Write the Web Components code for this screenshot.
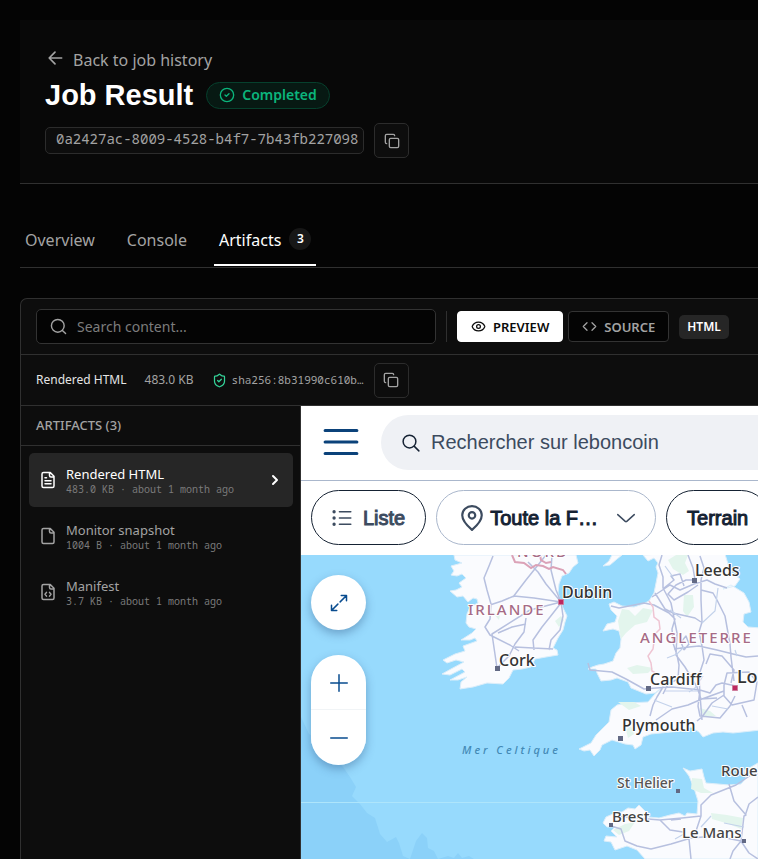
<!DOCTYPE html>
<html lang="en">
<head>
<meta charset="utf-8">
<meta name="viewport" content="width=device-width, initial-scale=1">
<title>Job Result</title>
<style>
  body { margin: 0; background: #040404; font-family: "Noto Sans", "Open Sans", sans-serif; }
</style>
</head>
<body>
<job-page></job-page>
<script>
const ICONS = {
  back: '<path d="m12 19-7-7 7-7M20 12H5"/>',
  check: '<circle cx="12" cy="12" r="10"/><path d="m9 12 2 2 4-4"/>',
  copy: '<rect width="14" height="14" x="8" y="8" rx="2"/><path d="M4 16c-1.1 0-2-.9-2-2V4c0-1.1.9-2 2-2h10c1.1 0 2 .9 2 2"/>',
  search: '<circle cx="11" cy="11" r="9"/><path d="m22 22-4.5-4.5"/>',
  eye: '<path d="M2 12.3a1 1 0 0 1 0-.6 10.8 10.8 0 0 1 20 0 1 1 0 0 1 0 .6 10.8 10.8 0 0 1-20 0"/><circle cx="12" cy="12" r="3"/>',
  code: '<path d="m16 18 6-6-6-6M8 6l-6 6 6 6"/>',
  shield: '<path d="M20 13c0 5-3.500 7.500-7.700 8.950a1 1 0 0 1-.67-.01C7.500 20.500 4 18 4 13V6a1 1 0 0 1 1-1c2 0 4.500-1.200 6.240-2.720a1.170 1.170 0 0 1 1.520 0C14.510 3.810 17 5 19 5a1 1 0 0 1 1 1z"/><path d="m9 12 2 2 4-4"/>',
  filetext: '<path d="M15 2H6a2 2 0 0 0-2 2v16a2 2 0 0 0 2 2h12a2 2 0 0 0 2-2V7zM14 2v4a2 2 0 0 0 2 2h4M10 9H8M16 13H8M16 17H8"/>',
  file: '<path d="M15 2H6a2 2 0 0 0-2 2v16a2 2 0 0 0 2 2h12a2 2 0 0 0 2-2V7zM14 2v4a2 2 0 0 0 2 2h4"/>',
  filecode: '<path d="M15 2H6a2 2 0 0 0-2 2v16a2 2 0 0 0 2 2h12a2 2 0 0 0 2-2V7zM14 2v4a2 2 0 0 0 2 2h4M10 12.500 8 15l2 2.500M14 12.500l2 2.500-2 2.500"/>',
  chevron: '<path d="m9 18 6-6-6-6"/>',
  menu: '<path d="M2 4.750h20M2 12h20M2 19.250h20"/>',
  lens: '<circle cx="10" cy="10" r="8.500"/><path d="m16.500 16.500 6 6"/>',
  list: '<path d="M9 4.500h13.500M9 12h13.500M9 19.500h13.500"/><path d="M2.500 4.500h.01M2.500 12h.01M2.500 19.500h.01" stroke-width="4"/>',
  pin: '<path d="M12 23C8.500 20 3 14.500 3 9.500a9 8.500 0 0 1 18 0C21 14.500 15.500 20 12 23z"/><circle cx="12" cy="9.500" r="3"/>',
  down: '<path d="m1 7.500 10 9q1 .8 2 0l10-9"/>',
  expand: '<path d="M15 2h7v7M22 2l-8.500 8.500M9 22H2v-7M2 22l8.500-8.500"/>',
  plus: '<path d="M12 1v22M1 12h22"/>',
  minus: '<path d="M1 12h22"/>'
};

const define = (name, markup, setup) => {
  const template = document.createElement('template');
  template.innerHTML = markup;
  customElements.define(name, class extends HTMLElement {
    static get observedAttributes() { return ['name']; }
    constructor() {
      super();
      this.attachShadow({ mode: 'open' }).append(template.content.cloneNode(true));
    }
    connectedCallback() { if (setup) setup(this, this.shadowRoot); }
    attributeChangedCallback() { if (setup) setup(this, this.shadowRoot); }
  });
};

define('ui-icon', `
  <style>
    :host { display: inline-flex; flex: none; width: var(--size, 16px); height: var(--size, 16px); }
    svg { width: 100%; height: 100%; fill: none; stroke: currentColor; stroke-linecap: round; stroke-linejoin: round; }
  </style>
  <svg viewBox="0 0 24 24" aria-hidden="true"></svg>`,
  (el, root) => {
    const svg = root.querySelector('svg');
    svg.innerHTML = ICONS[el.getAttribute('name')] || '';
    svg.setAttribute('stroke-width', el.getAttribute('weight') || 2);
  });

define('copy-button', `
  <style>
    :host { display: inline-flex; flex: none; }
    button { display: grid; place-items: center; width: 35px; height: 35px; padding: 0; color: #a3a3a3;
      background: #0d0d0d; border: 1px solid #2c2c2c; border-radius: 5px; cursor: pointer; }
  </style>
  <button type="button" aria-label="Copy"><ui-icon name="copy"></ui-icon></button>`);

define('status-badge', `
  <style>
    :host { display: inline-flex; align-items: center; gap: 7px; box-sizing: border-box; height: 27px; padding: 0 12px;
      border: 1px solid #06402d; border-radius: 14px; background: #071913; color: #0bb57c;
      font-size: 14px; line-height: 20px; font-weight: 600; }
  </style>
  <ui-icon name="check"></ui-icon><slot></slot>`);

define('job-header', `
  <style>
    :host { display: flex; flex-direction: column; align-items: flex-start; padding: 28px 25px 25px;
      background: #080808; border-bottom: 1px solid #303030; }
    a { display: flex; align-items: center; gap: 8px; color: #a3a3a3; font-size: 16px; line-height: 24px; text-decoration: none; }
    a ui-icon { --size: 20px; margin-bottom: 4px; }
    .title { display: flex; align-items: center; gap: 13px; }
    h1 { margin: 0; color: #fff; font: bold 29px/46px "Liberation Sans", Arial, sans-serif; }
    .id { display: flex; align-items: center; gap: 10px; padding-top: 5px; }
    code { box-sizing: border-box; height: 27px; padding: 0 5px 0 10px; border: 1px solid #2c2c2c; border-radius: 5px;
      background: #0d0d0d; color: #a3a3a3; font: 14px/22px "Noto Sans Mono", "DejaVu Sans Mono", monospace; }
  </style>
  <a href="#history"><ui-icon name="back"></ui-icon>Back to job history</a>
  <div class="title"><h1>Job Result</h1><status-badge>Completed</status-badge></div>
  <div class="id"><code>0a2427ac-8009-4528-b4f7-7b43fb227098</code><copy-button></copy-button></div>`);

define('tab-item', `
  <style>
    :host { display: block; }
    button { display: flex; align-items: center; gap: 8px; height: 57px; padding: 7px 5px 0; border: 0; border-bottom: 2px solid transparent;
      background: none; color: #a3a3a3; font: 16px/24px "Noto Sans", sans-serif; cursor: pointer; }
    :host([selected]) button { color: #fff; border-color: #fff; }
  </style>
  <button type="button" role="tab"><slot></slot><slot name="count"></slot></button>`);

define('tab-bar', `
  <style>
    :host { display: flex; gap: 22px; padding-bottom: 1px; border-bottom: 1px solid #303030; }
    span { display: grid; place-items: center; width: 22px; height: 22px; margin-bottom: 2px; border-radius: 11px; background: #171717; color: #fff; font-size: 12px; line-height: 16px; font-weight: 600; }
  </style>
  <tab-item>Overview</tab-item><tab-item>Console</tab-item>
  <tab-item selected>Artifacts<span slot="count">3</span></tab-item>`);

define('view-button', `
  <style>
    :host { display: inline-flex; flex: none; }
    button { display: flex; align-items: center; gap: 7px; height: 31px; padding: 0 13px; border: 1px solid #333;
      border-radius: 4px; background: #040404; color: #a3a3a3; font: 600 13px/18px "Noto Sans", sans-serif; cursor: pointer; }
    :host([active]) button { background: #fff; border-color: #fff; color: #0a0a0a; }
    ui-icon { --size: 15px; }
  </style>
  <button type="button"><ui-icon></ui-icon><slot></slot></button>`,
  (el, root) => root.querySelector('ui-icon').setAttribute('name', el.getAttribute('icon')));

define('artifact-toolbar', `
  <style>
    :host { display: flex; align-items: center; height: 55px; padding: 0 15px; border-bottom: 1px solid #303030; }
    label { display: flex; align-items: center; gap: 10px; box-sizing: border-box; width: 400px; height: 35px; padding: 0 13px;
      border: 1px solid #333; border-radius: 5px; background: #040404; color: #a3a3a3; }
    input { flex: 1; min-width: 0; padding: 0; border: 0; outline: 0; background: none; color: #fff; font: 14px/20px "Noto Sans", sans-serif; }
    input::placeholder { color: #7c7c7c; opacity: 1; }
    hr { width: 1px; height: 31px; margin: 0 10px; border: 0; background: #303030; }
    .views { display: flex; gap: 5px; }
    .type { margin-left: 10px; padding: 0 8px; border-radius: 5px; background: #262626; color: #fff; font-size: 12px; line-height: 24px; font-weight: 600; }
    ui-icon { --size: 17px; }
  </style>
  <label><ui-icon name="search"></ui-icon><input type="search" aria-label="Search content" placeholder="Search content..."></label>
  <hr>
  <div class="views"><view-button active icon="eye">PREVIEW</view-button><view-button icon="code">SOURCE</view-button></div>
  <span class="type">HTML</span>`);

define('artifact-meta', `
  <style>
    :host { display: flex; align-items: center; height: 50px; padding: 0 15px; border-bottom: 1px solid #303030; color: #a3a3a3; font-size: 12px; line-height: 18px; }
    .name { color: #e5e5e5; }
    .size { margin: 0 18px; }
    ui-icon { --size: 15px; color: #34d399; margin-right: 5px; }
    code { font: 11px/16px "Noto Sans Mono", "DejaVu Sans Mono", monospace; margin-right: 10px; }
  </style>
  <span class="name">Rendered HTML</span><span class="size">483.0 KB</span>
  <ui-icon name="shield"></ui-icon><code>sha256:8b31990c610b…</code><copy-button></copy-button>`);

define('artifact-item', `
  <style>
    :host { display: block; }
    button { display: flex; align-items: center; gap: 9px; width: 100%; height: 54px; padding: 0 10px; border: 0; border-radius: 5px;
      background: none; color: #a3a3a3; text-align: left; font: 13px/17px "Noto Sans", sans-serif; cursor: pointer; }
    :host([selected]) button { background: #262626; color: #fff; }
    div { flex: 1; min-width: 0; }
    span { display: block; }
    .sub { color: #7b7b7b; font: 10px/12px "Noto Sans Mono", "DejaVu Sans Mono", monospace; }
    ui-icon { --size: 18px; }
    .go { display: none; }
    :host([selected]) .go { display: inline-flex; --size: 16px; }
  </style>
  <button type="button"><ui-icon class="kind"></ui-icon><div><span><slot></slot></span><span class="sub"></span></div><ui-icon class="go" name="chevron" weight="3"></ui-icon></button>`,
  (el, root) => {
    root.querySelector('.kind').setAttribute('name', el.getAttribute('icon'));
    root.querySelector('.sub').textContent = el.getAttribute('detail');
  });

define('artifact-list', `
  <style>
    :host { display: block; flex: none; width: 279px; border-right: 1px solid #303030; }
    h2 { margin: 0; padding: 0 15px; border-bottom: 1px solid #303030; color: #a3a3a3; font-size: 13px; line-height: 39px; font-weight: 500; }
    nav { display: flex; flex-direction: column; gap: 2px; padding: 7px 7px 7px 8px; }
  </style>
  <h2>ARTIFACTS (3)</h2>
  <nav>
    <artifact-item selected icon="filetext" detail="483.0 KB · about 1 month ago">Rendered HTML</artifact-item>
    <artifact-item icon="file" detail="1004 B · about 1 month ago">Monitor snapshot</artifact-item>
    <artifact-item icon="filecode" detail="3.7 KB · about 1 month ago">Manifest</artifact-item>
  </nav>`);

define('filter-pill', `
  <style>
    :host { display: inline-flex; flex: none; }
    button { display: flex; align-items: center; gap: var(--gap, 10px); height: 55px; padding: 0 20px; white-space: nowrap;
      border: 1px solid var(--line, #152233); border-radius: 28px; background: #fff; color: var(--ink, #152233);
      font: 20px/28px "Liberation Sans", Arial, sans-serif; -webkit-text-stroke: 1px; cursor: pointer; }
  </style>
  <button type="button"><slot></slot></button>`);

define('coast-map', `
  <style>
    :host { display: block; position: relative; flex: 1; min-height: 304px; overflow: hidden; background: #97dafd; }
    .chart { position: absolute; inset: 0; width: 100%; height: 100%; }
    .land { fill: #fafbfe; stroke: #dceefa; stroke-width: 1; }
    .wood { fill: #e3f5ed; }
    .road { fill: none; stroke: #b7c0df; stroke-width: 1.500; stroke-linejoin: round; }
    .minor { fill: none; stroke: #c3d2eb; stroke-width: 1.200; }
    .frontier { fill: none; stroke: #efc5d3; stroke-width: 1.500; }
    text { font-family: "Noto Sans", sans-serif; paint-order: stroke; stroke: #fff; stroke-width: 2px; stroke-linejoin: round; fill: #333; font-weight: 500; font-size: 16px; }
    .small { font-size: 14px; fill: #555; }
    .mid { font-size: 15px; fill: #444; }
    .big { font-size: 18px; }
    .country { fill: #a66b86; letter-spacing: 2px; font-size: 15px; }
    .sea { fill: #4389b5; font-size: 11px; font-style: italic; letter-spacing: 3px; stroke: none; }
    .controls { position: absolute; left: 10px; top: 20px; display: flex; flex-direction: column; gap: 25px; }
    .zoom { display: flex; flex-direction: column; border-radius: 28px; overflow: hidden; }
    .zoom, .full { box-shadow: 0 4px 10px rgba(30, 60, 110, .35); }
    button { display: grid; place-items: center; width: 55px; height: 55px; padding: 0; border: 0; background: #fff; color: #094c8f; cursor: pointer; --size: 18px; }
    .full { border-radius: 28px; }
    .zoom button + button { box-shadow: 0 -1px #f1f4f6; }
  </style>
  <svg class="chart" viewBox="301 555 457 304" preserveAspectRatio="xMinYMin slice" role="img" aria-label="Map">
    <path fill="#8bd1f9" d="M301 717l8 17 18 15 16 18 7 10 6 10-4 9 8 8 7 9 8 5 5 16 7 8 9-5 3 6 4 13 7 3 6-18 6-8 5 5 1 10 6 3 4 8 10-3 6 2 4-5 4 5 7-2 8 5H301z"/>
    <path stroke="#aee5fb" d="M301 802.500H758"/>
    <path class="land" d="M454 555l1 5 7 3-11 3 3 5-3 4 6 1 5-2 4 4-7 5 3 4-6 3-6 1 7 6 6-1 5 6 5-4 4 1 1 4-8 4-3 7-1 9 3 4 7 2-4 4-11 7 9 0 5-2 2 3-14 5 2 5-10 3-12 6 4 3 9-3 8 2-13 7-9 5 8 1 12-6 3 3-15 8 8 0 9-3-6 5L460 689l13-2 14-4 16 1 6-6 4-8 9-1 9-2 4-8 11-2 12-2-1-5-4-2 5-10 5-8 2-8 2-6-4-8-2-6-3-9 1-9 3-8 7-3 4-6 5-4-2-8z"/>
    <path class="land" d="M603 566l7-1 7-6 5-4H612l-3 6z"/>
    <path class="land" d="M643 555l5 6 6-3 4 5-2 4 2 6-2 10-2 10-5 8-6 3-9 3-12-1-8-4-5 2 2 6 6 6-2 6-8 2-4 7 10-2 6 2 2 8-1 9-4 5-3 8-9 3-6 1-6 2-4 2 8 0 1 4 1 2 3 6 10-1 6-2 11 4 3 6 15 6 9-1 10-8-10 9-7 8-21 1-10 2-6 5-2 12-13 13-5 8-12 6 5 2 6-1 4 6 6-6 2-5 10-5 13 4 8 1 2 4 6-4 2-8 8-3 20-2 12-1 8-4 8 5 4 5 10-4 10-1 10 1 28-3V628l-13-1-5-5 1-8 7-2-2-10-5-9-13-8-8 4 12-3 5-7-8-6-3-6-5-16z"/>
    <path class="land" d="M683 768l7 3 12-2 2 8 2 6 12 1 11 1 12-1 5-6-2-8 7-3 7-4v96H645l-8-9-10-4-12 4-4-8-7-1 2-5 11 1-6-6 4-4-8 0-4-4 3-6 9-4 7-1 6-4 7 1 4-4 7 7 3 5 10 1 11-3 9-2 6 3 2-3 10 1 1-13-4-13-5-12z"/>
    <path class="wood" d="M668 560l8-5h12l-3 8 4 8-6 4-10-6zM684 595l9 0 1 12-7 10-4-6zM622 609l7 1 6 6 8-8 10 2-6 12-12 3-9 8-5 6-3-18zM627 668l10-3 16 3-5 5-15 1zM618 702l16 0 7 4-12 4zM692 778l10 1 2 9 9 5-12 0-10-4zM711 813l16 2 16 3-2 11-12-5-17-5zM613 830l12-6 10-2-6 9-10 4zM555 621l6-5 3 4-5 7zM492 612l8 3-1 5zM626 730l5-4 3 8-6 4zM700 708l10 3 6 5-12 1z"/>
    <g class="road">
      <path d="M497 668l-5-34 38-24 31-8M493 556l-4 10-5 12 3 12 4 14-1 15-5 8 5 8 20 10 9 6M490 605l12-4 12-5 20 2 27 4M513 597l13-17 20-25M561 602l-15-18-8-12-10-10M561 602l-5-12-5-20 1-15M561 602l2 14-3 14-9 10-2 10M534 650l-1-10 9-13 8-10 11-14M497 668l12-12 6-12 9-12 2-14M498 633l14-6 14-3M515 647l18 1 20 1"/>
      <path d="M611 606l8 2 25-5 10 2 15 8 6 6-3 10 1 14 4 12 2 10-1 14-10 5-5 10M662 555l-3 10 4 12 0 11 8 15 6 30-1 22 9 12 12 20 4 12 16-1M652 597l12-8 6-4 10 5 14-6 13-4 8 4 12 4M695 580l-2-12-5-13M694 580l-8 0-10 5-8 9 6 6 14-8 10-7M664 588l10-8-3-4 9-2 4 12M700 556l4 12-3 12 0 20 1 22-3 10 3 14 2 14-5 15 1 20 2 25M701 590l12 3 4 7 8 16 5 28 1 13 3 24M674 649l15-2 10-1 18 4 16 4 13 3 12-1M736 686l-14-3-6 2-6 8-10-3-28-3-16 1-12 1-18-10-14-7-22-2-2-7M655 593l10 16 8 4 22 5 6 4M706 664l4-10 12 2 12 14-3 13M684 650l-3-8 5-6 3 8-5 6M724 685l3-12 22-1 8 10-3 18-22 5-8-9zM742 705l5 12M724 695l-12 8-10 14-5 4M700 690l-2 16 2 10 20 2 10-12 5-10M656 720l16-11 16-4 14-6 22-8M650 716l3-11 4-8 6-10"/>
      <path d="M611 826l10 3 4 12 12 5 14 3 20-5 20-6 25-2 25 5M616 816l20 2 24 2 22-2 19-2 0-11 10-10 25-10 15-10 7-1M701 816l-6 18-6 5 2 20M741 841l3-25 2-1-12-14-5-17M741 841l-8 10-3 8M741 841l8 12 9 6M745 816l4-12 9-7M660 820l10 10 13 2M671 820l10-1"/>
    </g>
    <g class="minor"><path d="M665 566l8 11M670 610l11 8M684 647l-7 7-10 4M718 588l-3 23-13 12M735 650l2 6M703 676l-8 12-6 4M654 700l18 7M665 691l33 0M712 706l16 3M675 839l9-5M711 816l-10 11M724 823l20 4"/></g>
    <path class="frontier" d="M649 601l4 6 1 10 5 4 1 8-5 5-2 15-5 7 3 7 1 8 7 4"/>
    <path fill="none" stroke="#dba2b7" stroke-width="2" d="M512 555l3 7 9 1 7 5 5-3 7 1 6 3 4-2 10 3 3 4M540 555l1 5 5 3 5-1"/>
    <g fill="#626984"><path d="M495 666h5v5h-5zM692 578h5v5h-5zM646 686h5v5h-5zM618 736h5v5h-5zM676 789h4v4h-4zM609 823h4v4h-4zM742 839h4v4h-4z"/></g>
    <path fill="#bd2860" stroke="#ce7c9c" d="M558.500 599.500h5v5h-5zM732.500 685.500h5v5h-5z"/>
    <text class="country" x="517" y="557">NORD</text>
    <text class="country" x="468" y="615">IRLANDE</text>
    <text class="country" x="640" y="643">ANGLETERRE</text>
    <text x="695" y="576">Leeds</text><text x="562" y="598">Dublin</text><text x="499" y="666">Cork</text>
    <text x="650" y="685">Cardiff</text><text class="big" x="737" y="683">London</text><text x="622" y="731">Plymouth</text>
    <text class="small" x="617" y="788">St Helier</text><text class="mid" x="721" y="776">Rouen</text>
    <text class="mid" x="612" y="822">Brest</text><text class="mid" x="682" y="838">Le Mans</text>
    <text class="sea" x="462" y="754">Mer Celtique</text>
  </svg>
  <div class="controls">
    <button class="full" type="button" aria-label="Agrandir"><ui-icon name="expand"></ui-icon></button>
    <div class="zoom"><button type="button" aria-label="Zoomer"><ui-icon name="plus"></ui-icon></button><button type="button" aria-label="Dézoomer"><ui-icon name="minus"></ui-icon></button></div>
  </div>`);

define('site-preview', `
  <style>
    :host { display: flex; flex-direction: column; flex: 1; min-width: 0; overflow: hidden; background: #fff; }
    header { display: flex; align-items: center; gap: 20px; height: 74px; padding-left: 20px; border-bottom: 1px solid #aab7cc; box-sizing: content-box; }
    .menu { display: grid; place-items: center; width: 40px; height: 40px; margin-bottom: 2px; padding: 0; border: 0; background: none; color: #0b427a; --size: 38px; cursor: pointer; }
    label { flex: 1; display: flex; align-items: center; gap: 11px; height: 55px; margin-bottom: 1px; padding-left: 21px; border-radius: 28px 0 0 28px; background: #eff1f5; color: #152233; --size: 18px; }
    input { flex: 1; min-width: 0; margin-bottom: 2px; padding: 0; border: 0; outline: 0; background: none; font: 20px/28px "Liberation Sans", Arial, sans-serif; }
    input::placeholder { color: #3c4b5f; opacity: 1; }
    .filters { display: flex; gap: 10px; padding: 9px 0 10px 10px; }
    filter-pill { padding-bottom: 0; }
    .list { --ink: #3c4b5f; --size: 20px; --gap: 11px; }
    .place { --line: #aab7cc; --gap: 5px; }
    .place ui-icon { color: #3c4b5f; }
    .pin { --size: 26px; margin-left: 2px; }
    .down { --size: 18px; margin-left: 14px; }
  </style>
  <header><button class="menu" type="button" aria-label="Menu"><ui-icon name="menu" weight="2"></ui-icon></button>
    <label><ui-icon name="lens"></ui-icon><input type="search" aria-label="Rechercher" placeholder="Rechercher sur leboncoin"></label></header>
  <div class="filters">
    <filter-pill class="list"><ui-icon name="list"></ui-icon>Liste</filter-pill>
    <filter-pill class="place"><ui-icon class="pin" name="pin"></ui-icon>Toute la F…<ui-icon class="down" name="down"></ui-icon></filter-pill>
    <filter-pill>Terrain</filter-pill>
  </div>
  <coast-map></coast-map>`);

define('artifact-panel', `
  <style>
    :host { display: flex; flex-direction: column; flex: 1; border: 1px solid #303030; border-width: 1px 0 0 1px; border-radius: 7px 0 0 0; background: #0d0d0d; }
    main { display: flex; flex: 1; }
  </style>
  <artifact-toolbar></artifact-toolbar><artifact-meta></artifact-meta>
  <main><artifact-list></artifact-list><site-preview></site-preview></main>`);

define('job-page', `
  <style>
    :host { display: flex; flex-direction: column; box-sizing: border-box; min-height: 100vh; padding: 20px 0 0 20px; overflow: hidden; }
    tab-bar { margin: 25px 0 30px; }
  </style>
  <job-header></job-header><tab-bar></tab-bar><artifact-panel></artifact-panel>`);
</script>
</body>
</html>
